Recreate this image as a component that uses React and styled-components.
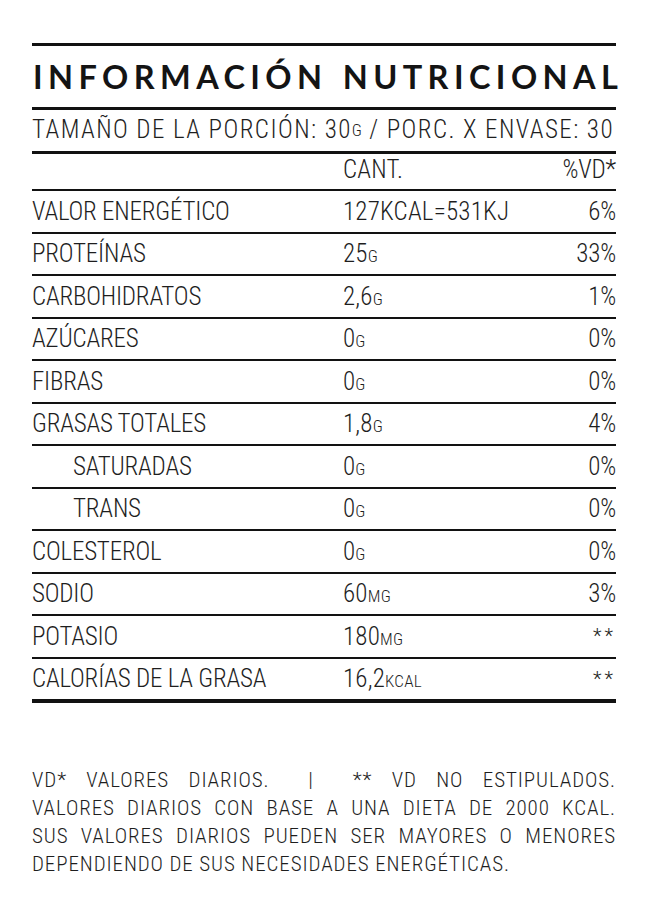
import React from "react";
import styled, { createGlobalStyle } from "styled-components";

const GlobalStyle = createGlobalStyle`
  html, body { margin: 0; padding: 0; background: #ffffff; }
  body { font-family: "Roboto Condensed", "Liberation Sans", sans-serif; color: #1e1e1e; }
`;

const Page = styled.main`
  width: 648px;
  min-height: 914px;
  padding: 43px 32px 0 32px;
  box-sizing: border-box;
`;

const Panel = styled.section`
  width: 584px;
  display: flex;
  flex-direction: column;
`;

const Rule = styled.div`
  height: ${(p) => p.$weight}px;
  background: #121212;
`;

const Title = styled.h1`
  margin: 0;
  height: 61px;
  display: flex;
  align-items: center;
  padding-left: 1px;
  font-family: Lato, "Liberation Sans", sans-serif;
  font-weight: 700;
  font-size: 32.5px;
  letter-spacing: 5.4px;
  word-spacing: 2px;
  white-space: nowrap;
  color: #141414;
`;

const Serving = styled.div`
  height: 41px;
  display: flex;
  align-items: center;
  padding-bottom: 2px;
  box-sizing: border-box;
  font-weight: 300;
  font-size: 25px;
  letter-spacing: 1.45px;
  white-space: nowrap;
`;

const Unit = styled.span`
  font-size: 17px;
  letter-spacing: 0.2px;
`;

const Row = styled.div`
  display: grid;
  grid-template-columns: 311px 1fr auto;
  align-items: center;
  box-sizing: border-box;
  height: ${(p) => (p.$head ? "37px" : p.$last ? "44.5px" : "42.5px")};
  border-bottom: ${(p) => (p.$last ? "4px" : "2px")} solid #121212;
  padding-bottom: ${(p) => (p.$head ? "5px" : "0")};
  font-weight: 300;
  font-size: 25px;
  letter-spacing: -0.2px;
  white-space: nowrap;
`;

const Name = styled.span`
  padding-left: ${(p) => (p.$indent ? "41px" : "0")};
`;

const Amount = styled.span`
  letter-spacing: 0.2px;
`;

const Percent = styled.span`
  text-align: right;
  letter-spacing: ${(p) => (p.$stars ? "3px" : "-0.2px")};
  font-size: ${(p) => (p.$stars ? "20px" : "25px")};
`;

const Footnote = styled.footer`
  width: 584px;
  margin-top: 63px;
  font-weight: 300;
  font-size: 21px;
  line-height: 28px;
  letter-spacing: 0.9px;
`;

const FootLine = styled.div`
  text-align: ${(p) => (p.$justify ? "justify" : "left")};
  text-align-last: ${(p) => (p.$justify ? "justify" : "left")};
  white-space: nowrap;
`;

const rows = [
  { name: "VALOR ENERGÉTICO", amount: "127KCAL=531KJ", vd: "6%" },
  { name: "PROTEÍNAS", amount: "25", unit: "G", vd: "33%" },
  { name: "CARBOHIDRATOS", amount: "2,6", unit: "G", vd: "1%" },
  { name: "AZÚCARES", amount: "0", unit: "G", vd: "0%" },
  { name: "FIBRAS", amount: "0", unit: "G", vd: "0%" },
  { name: "GRASAS TOTALES", amount: "1,8", unit: "G", vd: "4%" },
  { name: "SATURADAS", amount: "0", unit: "G", vd: "0%", indent: true },
  { name: "TRANS", amount: "0", unit: "G", vd: "0%", indent: true },
  { name: "COLESTEROL", amount: "0", unit: "G", vd: "0%" },
  { name: "SODIO", amount: "60", unit: "MG", vd: "3%" },
  { name: "POTASIO", amount: "180", unit: "MG", vd: "**" },
  { name: "CALORÍAS DE LA GRASA", amount: "16,2", unit: "KCAL", vd: "**" },
];

export default function App() {
  return (
    <Page>
      <GlobalStyle />
      <Panel>
        <Rule $weight={3} />
        <Title>INFORMACIÓN NUTRICIONAL</Title>
        <Rule $weight={3} />
        <Serving>
          TAMAÑO DE LA PORCIÓN: 30<Unit>G</Unit>&nbsp;/ PORC. X ENVASE: 30
        </Serving>
        <Rule $weight={3} />
        <Row $head>
          <Name />
          <Amount>CANT.</Amount>
          <Percent>%VD*</Percent>
        </Row>
        {rows.map((r, i) => (
          <Row key={r.name} $last={i === rows.length - 1}>
            <Name $indent={r.indent}>{r.name}</Name>
            <Amount>
              {r.amount}
              {r.unit && <Unit>{r.unit}</Unit>}
            </Amount>
            <Percent $stars={r.vd === "**"}>{r.vd}</Percent>
          </Row>
        ))}
      </Panel>
      <Footnote>
        <FootLine $justify>
          VD* VALORES DIARIOS. &nbsp;| &nbsp;** VD NO ESTIPULADOS.
        </FootLine>
        <FootLine $justify>
          VALORES DIARIOS CON BASE A UNA DIETA DE 2000 KCAL.
        </FootLine>
        <FootLine $justify>
          SUS VALORES DIARIOS PUEDEN SER MAYORES O MENORES
        </FootLine>
        <FootLine>DEPENDIENDO DE SUS NECESIDADES ENERGÉTICAS.</FootLine>
      </Footnote>
    </Page>
  );
}
